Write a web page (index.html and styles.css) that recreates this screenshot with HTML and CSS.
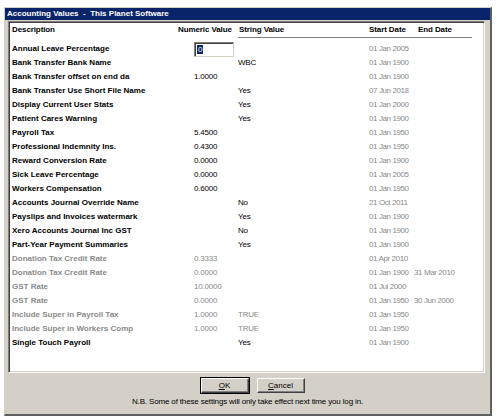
FILE: index.html
```html
<!DOCTYPE html>
<html lang="en">
<head>
    <meta charset="UTF-8">
    <title>Accounting Values</title>
    <link rel="stylesheet" href="styles.css">
</head>
<body>
<div class="window">
    <div class="titlebar">Accounting Values &nbsp;-&nbsp; This Planet Software</div>
    <div class="panel">
        <div class="head">
            <span>Description</span><span>Numeric Value</span><span>String Value</span><span>Start Date</span><span>End Date</span>
        </div>
        <div class="head-line"></div>
        <div class="row"><span class="d">Annual Leave Percentage</span><span class="num"><span class="edit"><span class="sel">0</span></span></span><span></span><span class="dt">01 Jan 2005</span><span></span></div>
        <div class="row"><span class="d">Bank Transfer Bank Name</span><span></span><span class="s">WBC</span><span class="dt">01 Jan 1900</span><span></span></div>
        <div class="row"><span class="d">Bank Transfer offset on end da</span><span class="n">1.0000</span><span></span><span class="dt">01 Jan 1900</span><span></span></div>
        <div class="row"><span class="d">Bank Transfer Use Short File Name</span><span></span><span class="s">Yes</span><span class="dt">07 Jun 2018</span><span></span></div>
        <div class="row"><span class="d">Display Current User Stats</span><span></span><span class="s">Yes</span><span class="dt">01 Jan 2000</span><span></span></div>
        <div class="row"><span class="d">Patient Cares Warning</span><span></span><span class="s">Yes</span><span class="dt">01 Jan 1900</span><span></span></div>
        <div class="row"><span class="d">Payroll Tax</span><span class="n">5.4500</span><span></span><span class="dt">01 Jan 1950</span><span></span></div>
        <div class="row"><span class="d">Professional Indemnity Ins.</span><span class="n">0.4300</span><span></span><span class="dt">01 Jan 1950</span><span></span></div>
        <div class="row"><span class="d">Reward Conversion Rate</span><span class="n">0.0000</span><span></span><span class="dt">01 Jan 1900</span><span></span></div>
        <div class="row"><span class="d">Sick Leave Percentage</span><span class="n">0.0000</span><span></span><span class="dt">01 Jan 2005</span><span></span></div>
        <div class="row"><span class="d">Workers Compensation</span><span class="n">0.6000</span><span></span><span class="dt">01 Jan 1950</span><span></span></div>
        <div class="row"><span class="d">Accounts Journal Override Name</span><span></span><span class="s">No</span><span class="dt">21 Oct 2011</span><span></span></div>
        <div class="row"><span class="d">Payslips and Invoices watermark</span><span></span><span class="s">Yes</span><span class="dt">01 Jan 1900</span><span></span></div>
        <div class="row"><span class="d">Xero Accounts Journal Inc GST</span><span></span><span class="s">No</span><span class="dt">01 Jan 1900</span><span></span></div>
        <div class="row"><span class="d">Part-Year Payment Summaries</span><span></span><span class="s">Yes</span><span class="dt">01 Jan 1900</span><span></span></div>
        <div class="row off"><span class="d">Donation Tax Credit Rate</span><span class="n">0.3333</span><span></span><span class="dt">01 Apr 2010</span><span></span></div>
        <div class="row off"><span class="d">Donation Tax Credit Rate</span><span class="n">0.0000</span><span></span><span class="dt">01 Jan 1900</span><span class="dt">31 Mar 2010</span></div>
        <div class="row off"><span class="d">GST Rate</span><span class="n">10.0000</span><span></span><span class="dt">01 Jul 2000</span><span></span></div>
        <div class="row off"><span class="d">GST Rate</span><span class="n">0.0000</span><span></span><span class="dt">01 Jan 1950</span><span class="dt">30 Jun 2000</span></div>
        <div class="row off"><span class="d">Include Super in Payroll Tax</span><span class="n">1.0000</span><span class="s">TRUE</span><span class="dt">01 Jan 1950</span><span></span></div>
        <div class="row off"><span class="d">Include Super in Workers Comp</span><span class="n">1.0000</span><span class="s">TRUE</span><span class="dt">01 Jan 1950</span><span></span></div>
        <div class="row"><span class="d">Single Touch Payroll</span><span></span><span class="s">Yes</span><span class="dt">01 Jan 1900</span><span></span></div>
    </div>
    <div class="footer">
        <div class="buttons">
            <button class="btn default"><u>O</u>K</button>
            <button class="btn"><u>C</u>ancel</button>
        </div>
        <div class="note">N.B. Some of these settings will only take effect next time you log in.</div>
    </div>
</div>
</body>
</html>
```

FILE: styles.css
```css
body { margin: 0; background: #fff; font-family: "Liberation Sans", Arial, sans-serif; font-size: 8px; color: #000; }

.window {
    box-sizing: border-box;
    width: 488px; height: 409px;
    margin: 7px 0 0 4px;
    background: #d4d0c8;
    border-top: 1px solid #d4d0c8;
    border-left: 1px solid #d4d0c8;
    border-right: 2px solid #606060;
    border-bottom: 2px solid #606060;
    display: flex; flex-direction: column;
}
.titlebar {
    height: 12px; line-height: 12px;
    padding-left: 2px;
    background: #0a246a; color: #fff;
    font-weight: bold; font-size: 8px;
}
.panel {
    box-sizing: border-box;
    height: 352px;
    margin: 1px 5px 0 3px;
    padding: 1px 0 0 3px;
    background: #fff;
    border-top: 1px solid #808080;
    border-left: 1px solid #808080;
    border-right: 1px solid #fff;
    border-bottom: 1px solid #fff;
    box-shadow: inset 1px 1px 0 #404040, inset -1px -1px 0 #d4d0c8;
}
.head {
    display: grid;
    grid-template-columns: 166px 61px 130px 49px 1fr;
    height: 14px; line-height: 14px;
    font-weight: bold;
    letter-spacing: -0.1px;
    white-space: nowrap;
}
.head-line {
    height: 1px;
    margin: 0 12px 0 226px;
    border-top: 1px solid #808080;
    border-bottom: 1px solid #fff;
}
.row {
    display: grid;
    grid-template-columns: 182px 44px 131px 45px 1fr;
    height: 14px; line-height: 14px;
    white-space: nowrap;
}
.head-line + .row { margin-top: 2px; }
.d { font-weight: bold; }
.n, .s { letter-spacing: -0.2px; }
.dt { color: #8a8a8a; letter-spacing: -0.4px; }
.row.off { color: #8a8a8a; }

.edit {
    display: inline-block;
    box-sizing: border-box;
    width: 40px; height: 15px;
    line-height: 11px;
    vertical-align: top;
    border-top: 1px solid #808080;
    border-left: 1px solid #808080;
    border-right: 1px solid #d4d0c8;
    border-bottom: 1px solid #d4d0c8;
    box-shadow: inset 1px 1px 0 #404040;
    padding: 1px 0 0 2px;
    background: #fff;
}
.sel { background: #0a246a; color: #fff; padding: 0 1px; }

.footer { flex: 1; display: flex; flex-direction: column; align-items: center; padding-top: 5px; }
.buttons { display: flex; gap: 8px; margin-left: 10px; }
.btn {
    box-sizing: border-box;
    width: 48px; height: 15px;
    padding: 0;
    font-family: "Liberation Sans", Arial, sans-serif; font-size: 8px;
    background: #d4d0c8; color: #000;
    border-top: 1px solid #fff;
    border-left: 1px solid #fff;
    border-right: 1px solid #404040;
    border-bottom: 1px solid #404040;
    box-shadow: inset -1px -1px 0 #808080;
}
.btn.default { outline: 1px solid #000; }
.note { margin-top: 4px; line-height: 10px; letter-spacing: -0.15px; }
```
